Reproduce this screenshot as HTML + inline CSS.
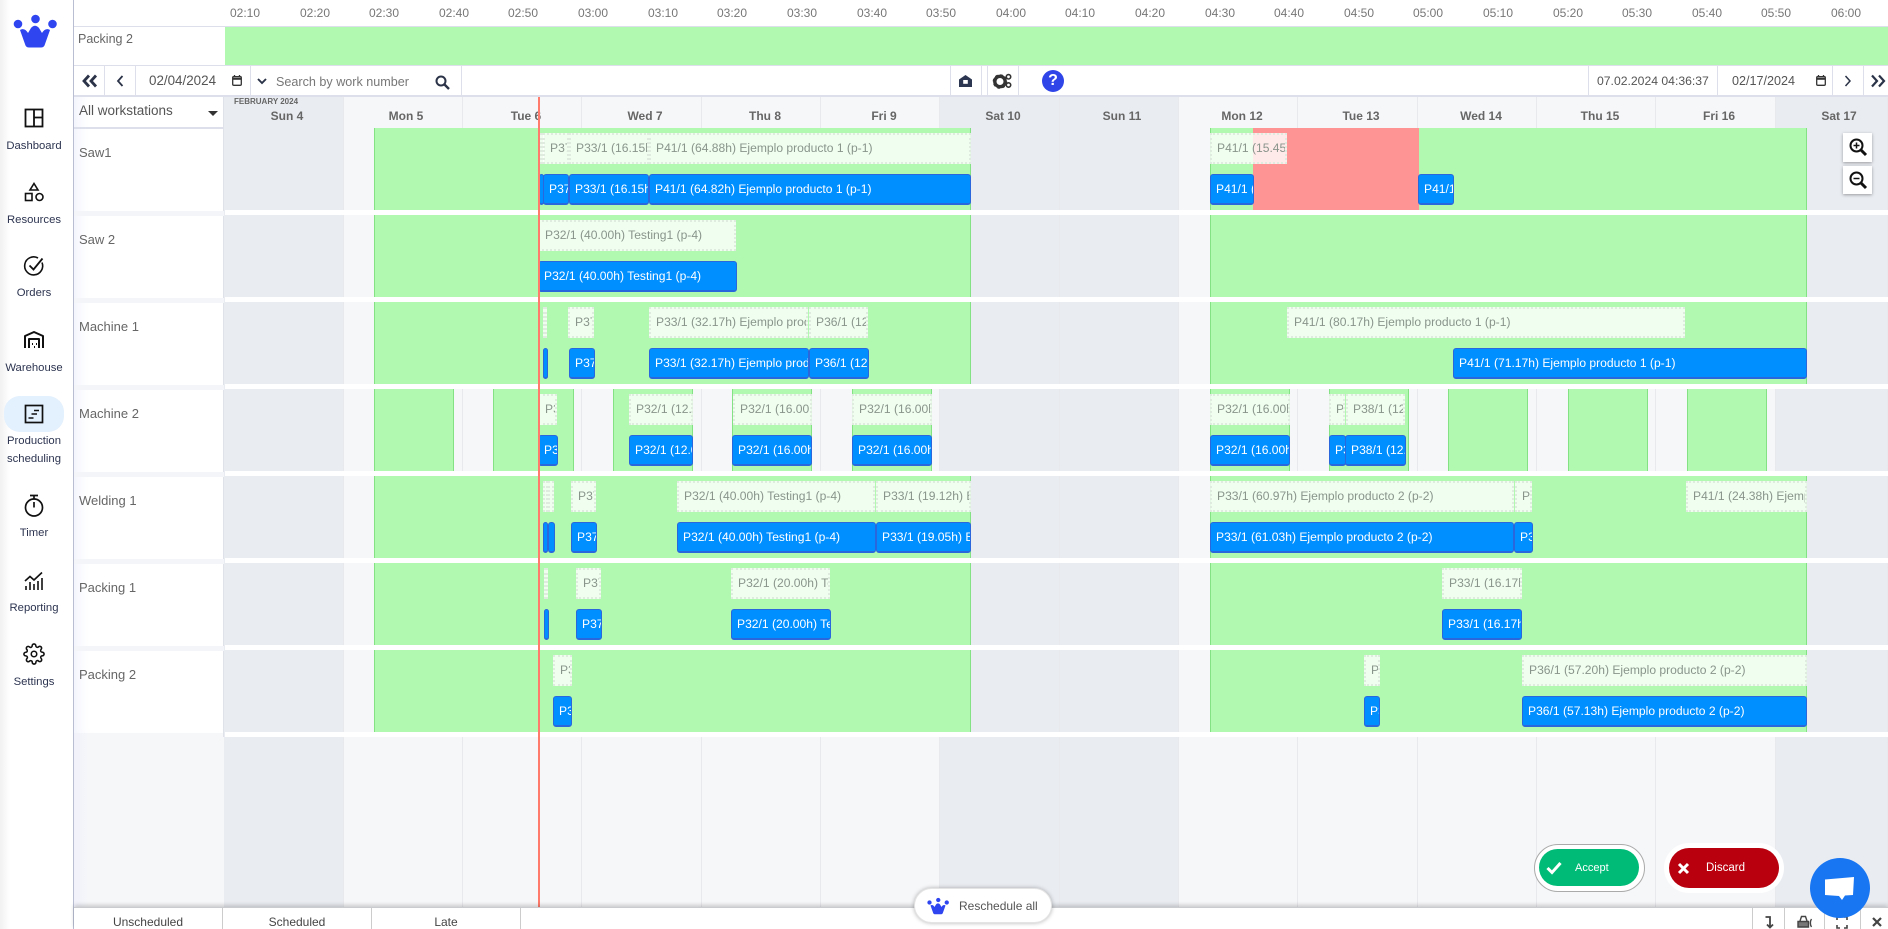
<!DOCTYPE html>
<html><head><meta charset="utf-8"><title>Production scheduling</title>
<style>
*{box-sizing:border-box}
html,body{margin:0;padding:0;width:1888px;height:929px;overflow:hidden;background:#fff;font-family:"Liberation Sans",sans-serif}
.a{position:absolute}
.t{position:absolute;top:6px;width:60px;text-align:center;font-size:12px;line-height:15px;color:#777}
.sb{position:absolute;left:0;width:68px;text-align:center;font-size:11.3px;line-height:18px;color:#2c3450}
.v{position:absolute;top:66px;width:1px;height:31px;background:#dde0ea}
.d{position:absolute;top:108px;width:60px;text-align:center;font-size:12px;font-weight:700;line-height:16px;color:#666}
.col{position:absolute;top:97px;height:810px;border-right:1px solid #e7e9ed}
.we{background:#e9ecf1}
.lab{position:absolute;left:79px;font-size:13px;line-height:16px;color:#666}
.gapl{position:absolute;left:74px;width:150px;height:5px;background:#f4f5f8}
.r{position:absolute;left:225px;width:1663px;height:82px}
.gr{position:absolute;top:0;height:82px;background:#b1f9b1;border-left:1px solid #84e184;border-right:1px solid #84e184}
.g,.b{position:absolute;overflow:hidden;white-space:nowrap;font-size:12.1px}
.g{top:5px;height:31px;line-height:27px;padding-left:5px;background:rgba(255,255,255,.8);border:2px dotted #dfebdf;color:#89948b}
.b{top:46px;height:31px;line-height:28px;padding-left:5px;background:#008fff;border:1px solid #2a66dc;border-bottom-width:2px;border-radius:3px;color:#fff}
.ic{position:absolute;overflow:visible}
.tab{position:absolute;top:908px;height:21px;border-right:1px solid #ccc;text-align:center;font-size:12px;line-height:28px;color:#444;overflow:hidden}
</style></head><body>

<!-- background columns -->
<div class="a" style="left:224px;top:97px;width:1664px;height:810px;background:#f6f7f9"></div>
<div class="col we" style="left:224px;width:120px"></div>
<div class="col" style="left:344px;width:119px"></div>
<div class="col" style="left:463px;width:119px"></div>
<div class="col" style="left:582px;width:120px"></div>
<div class="col" style="left:702px;width:119px"></div>
<div class="col" style="left:821px;width:119px"></div>
<div class="col we" style="left:940px;width:120px"></div>
<div class="col we" style="left:1060px;width:119px"></div>
<div class="col" style="left:1179px;width:119px"></div>
<div class="col" style="left:1298px;width:120px"></div>
<div class="col" style="left:1418px;width:119px"></div>
<div class="col" style="left:1537px;width:119px"></div>
<div class="col" style="left:1656px;width:120px"></div>
<div class="col we" style="left:1776px;width:112px"></div>

<!-- header row days -->
<div class="a" style="left:234px;top:97px;font-size:8px;line-height:10px;font-weight:700;color:#666">FEBRUARY 2024</div>
<div class="d" style="left:257px">Sun 4</div>
<div class="d" style="left:376px">Mon 5</div>
<div class="d" style="left:496px">Tue 6</div>
<div class="d" style="left:615px">Wed 7</div>
<div class="d" style="left:735px">Thu 8</div>
<div class="d" style="left:854px">Fri 9</div>
<div class="d" style="left:973px">Sat 10</div>
<div class="d" style="left:1092px">Sun 11</div>
<div class="d" style="left:1212px">Mon 12</div>
<div class="d" style="left:1331px">Tue 13</div>
<div class="d" style="left:1451px">Wed 14</div>
<div class="d" style="left:1570px">Thu 15</div>
<div class="d" style="left:1689px">Fri 16</div>
<div class="d" style="left:1809px">Sat 17</div>

<!-- white row gaps -->
<div class="a" style="left:225px;top:210px;width:1663px;height:5px;background:#fff"></div>
<div class="a" style="left:225px;top:297px;width:1663px;height:5px;background:#fff"></div>
<div class="a" style="left:225px;top:384px;width:1663px;height:5px;background:#fff"></div>
<div class="a" style="left:225px;top:471px;width:1663px;height:5px;background:#fff"></div>
<div class="a" style="left:225px;top:558px;width:1663px;height:5px;background:#fff"></div>
<div class="a" style="left:225px;top:645px;width:1663px;height:5px;background:#fff"></div>
<div class="a" style="left:225px;top:732px;width:1663px;height:5px;background:#fff"></div>

<!-- Rows: inner x = page x - 225 -->
<div class="r" style="top:128px">
  <div class="gr" style="left:149px;width:597px"></div>
  <div class="gr" style="left:985px;width:597px"></div>
  <div class="a" style="left:1028px;top:0;width:166px;height:82px;background:#ff9494"></div>
  <div class="g" style="left:315px;width:4px;padding:0"></div>
  <div class="g" style="left:318px;width:26px">P37/1</div>
  <div class="g" style="left:344px;width:80px">P33/1 (16.15h) Ejemplo</div>
  <div class="g" style="left:424px;width:322px">P41/1 (64.88h) Ejemplo producto 1 (p-1)</div>
  <div class="g" style="left:985px;width:77px">P41/1 (15.45h) Ejemplo</div>
  <div class="b" style="left:314px;width:5px;padding:0"></div>
  <div class="b" style="left:318px;width:26px">P37/1</div>
  <div class="b" style="left:344px;width:80px">P33/1 (16.15h) Ejemplo</div>
  <div class="b" style="left:424px;width:322px">P41/1 (64.82h) Ejemplo producto 1 (p-1)</div>
  <div class="b" style="left:985px;width:44px">P41/1 (15.4h)</div>
  <div class="b" style="left:1193px;width:36px">P41/1 (</div>
</div>
<div class="r" style="top:215px">
  <div class="gr" style="left:149px;width:597px"></div>
  <div class="gr" style="left:985px;width:597px"></div>
  <div class="g" style="left:313px;width:198px">P32/1 (40.00h) Testing1 (p-4)</div>
  <div class="b" style="left:313px;width:199px">P32/1 (40.00h) Testing1 (p-4)</div>
</div>
<div class="r" style="top:302px">
  <div class="gr" style="left:149px;width:597px"></div>
  <div class="gr" style="left:985px;width:597px"></div>
  <div class="g" style="left:318px;width:4px;padding:0"></div>
  <div class="g" style="left:343px;width:26px">P37/1</div>
  <div class="g" style="left:424px;width:159px">P33/1 (32.17h) Ejemplo producto</div>
  <div class="g" style="left:584px;width:59px">P36/1 (12.00h)</div>
  <div class="g" style="left:1062px;width:398px">P41/1 (80.17h) Ejemplo producto 1 (p-1)</div>
  <div class="b" style="left:318px;width:5px;padding:0"></div>
  <div class="b" style="left:344px;width:26px">P37/1</div>
  <div class="b" style="left:424px;width:160px">P33/1 (32.17h) Ejemplo producto</div>
  <div class="b" style="left:584px;width:60px">P36/1 (12.00h)</div>
  <div class="b" style="left:1228px;width:354px">P41/1 (71.17h) Ejemplo producto 1 (p-1)</div>
</div>
<div class="r" style="top:389px">
  <div class="gr" style="left:149px;width:80px"></div>
  <div class="gr" style="left:268px;width:81px"></div>
  <div class="gr" style="left:388px;width:80px"></div>
  <div class="gr" style="left:507px;width:80px"></div>
  <div class="gr" style="left:627px;width:80px"></div>
  <div class="gr" style="left:985px;width:80px"></div>
  <div class="gr" style="left:1104px;width:80px"></div>
  <div class="gr" style="left:1223px;width:80px"></div>
  <div class="gr" style="left:1343px;width:80px"></div>
  <div class="gr" style="left:1462px;width:80px"></div>
  <div class="g" style="left:313px;width:19px">P32/1</div>
  <div class="g" style="left:404px;width:64px">P32/1 (12.00h)</div>
  <div class="g" style="left:508px;width:79px">P32/1 (16.00h)</div>
  <div class="g" style="left:627px;width:80px">P32/1 (16.00h)</div>
  <div class="g" style="left:985px;width:80px">P32/1 (16.00h)</div>
  <div class="g" style="left:1104px;width:16px">P38/1</div>
  <div class="g" style="left:1121px;width:59px">P38/1 (12.00h)</div>
  <div class="b" style="left:313px;width:20px">P32/1</div>
  <div class="b" style="left:404px;width:64px">P32/1 (12.00h)</div>
  <div class="b" style="left:507px;width:80px">P32/1 (16.00h)</div>
  <div class="b" style="left:627px;width:80px">P32/1 (16.00h)</div>
  <div class="b" style="left:985px;width:80px">P32/1 (16.00h)</div>
  <div class="b" style="left:1104px;width:17px">P32/1</div>
  <div class="b" style="left:1120px;width:61px">P38/1 (12.00h)</div>
</div>
<div class="r" style="top:476px">
  <div class="gr" style="left:149px;width:597px"></div>
  <div class="gr" style="left:985px;width:597px"></div>
  <div class="g" style="left:318px;width:5px;padding:0"></div>
  <div class="g" style="left:323px;width:6px;padding:0"></div>
  <div class="g" style="left:346px;width:25px">P37/1</div>
  <div class="g" style="left:452px;width:198px">P32/1 (40.00h) Testing1 (p-4)</div>
  <div class="g" style="left:651px;width:95px">P33/1 (19.12h) Ejemplo</div>
  <div class="g" style="left:985px;width:304px">P33/1 (60.97h) Ejemplo producto 2 (p-2)</div>
  <div class="g" style="left:1290px;width:17px">P33/1</div>
  <div class="g" style="left:1461px;width:121px">P41/1 (24.38h) Ejemplo producto</div>
  <div class="b" style="left:318px;width:5px;padding:0"></div>
  <div class="b" style="left:323px;width:7px;padding:0"></div>
  <div class="b" style="left:346px;width:26px">P37/1</div>
  <div class="b" style="left:452px;width:199px">P32/1 (40.00h) Testing1 (p-4)</div>
  <div class="b" style="left:651px;width:95px">P33/1 (19.05h) Ejemplo</div>
  <div class="b" style="left:985px;width:304px">P33/1 (61.03h) Ejemplo producto 2 (p-2)</div>
  <div class="b" style="left:1289px;width:19px">P33/1</div>
</div>
<div class="r" style="top:563px">
  <div class="gr" style="left:149px;width:597px"></div>
  <div class="gr" style="left:985px;width:597px"></div>
  <div class="g" style="left:319px;width:4px;padding:0"></div>
  <div class="g" style="left:351px;width:25px">P37/1</div>
  <div class="g" style="left:506px;width:99px">P32/1 (20.00h) Testing1</div>
  <div class="g" style="left:1217px;width:80px">P33/1 (16.17h)</div>
  <div class="b" style="left:319px;width:5px;padding:0"></div>
  <div class="b" style="left:351px;width:26px">P37/1</div>
  <div class="b" style="left:506px;width:100px">P32/1 (20.00h) Testing1</div>
  <div class="b" style="left:1217px;width:80px">P33/1 (16.17h)</div>
</div>
<div class="r" style="top:650px">
  <div class="gr" style="left:149px;width:597px"></div>
  <div class="gr" style="left:985px;width:597px"></div>
  <div class="g" style="left:328px;width:19px">P33/1</div>
  <div class="g" style="left:1139px;width:16px">P33/1</div>
  <div class="g" style="left:1297px;width:285px">P36/1 (57.20h) Ejemplo producto 2 (p-2)</div>
  <div class="b" style="left:328px;width:19px">P33/1</div>
  <div class="b" style="left:1139px;width:16px">P33/1</div>
  <div class="b" style="left:1297px;width:285px">P36/1 (57.13h) Ejemplo producto 2 (p-2)</div>
</div>

<!-- now line -->
<div class="a" style="left:537.5px;top:97px;width:2px;height:810px;background:#ff7b6b"></div>

<!-- Time axis -->
<div class="a" style="left:0;top:0;width:1888px;height:27px;background:#fff;border-bottom:1px solid #dde0ea"></div>
<div class="t" style="left:215px">02:10</div><div class="t" style="left:285px">02:20</div><div class="t" style="left:354px">02:30</div><div class="t" style="left:424px">02:40</div><div class="t" style="left:493px">02:50</div><div class="t" style="left:563px">03:00</div><div class="t" style="left:633px">03:10</div><div class="t" style="left:702px">03:20</div><div class="t" style="left:772px">03:30</div><div class="t" style="left:842px">03:40</div><div class="t" style="left:911px">03:50</div><div class="t" style="left:981px">04:00</div><div class="t" style="left:1050px">04:10</div><div class="t" style="left:1120px">04:20</div><div class="t" style="left:1190px">04:30</div><div class="t" style="left:1259px">04:40</div><div class="t" style="left:1329px">04:50</div><div class="t" style="left:1398px">05:00</div><div class="t" style="left:1468px">05:10</div><div class="t" style="left:1538px">05:20</div><div class="t" style="left:1607px">05:30</div><div class="t" style="left:1677px">05:40</div><div class="t" style="left:1746px">05:50</div><div class="t" style="left:1816px">06:00</div>

<!-- Top packing row -->
<div class="a" style="left:74px;top:27px;width:151px;height:39px;background:#fff"></div>
<div class="a" style="left:78px;top:31px;font-size:12.5px;line-height:16px;color:#666">Packing 2</div>
<div class="a" style="left:225px;top:27px;width:1663px;height:38px;background:#b1f9b1"></div>

<!-- Toolbar -->
<div class="a" style="left:74px;top:65px;width:1814px;height:32px;background:#fff;border-top:1px solid #dde0ea;border-bottom:2px solid #dde0ea"></div>
<div class="v" style="left:104px"></div><div class="v" style="left:135px"></div><div class="v" style="left:250px"></div><div class="v" style="left:461px"></div>
<div class="v" style="left:950px"></div><div class="v" style="left:981px"></div><div class="v" style="left:987px"></div><div class="v" style="left:1018px"></div>
<div class="v" style="left:1588px"></div><div class="v" style="left:1717px"></div><div class="v" style="left:1832px"></div><div class="v" style="left:1863px"></div>

<svg class="ic" style="left:82px;top:74px" width="16" height="14" viewBox="0 0 16 14" fill="none" stroke="#2b3348" stroke-width="2.8"><path d="M7 1.500 2 7l5 5.500M14 1.500 9 7l5 5.500"/></svg>
<svg class="ic" style="left:116px;top:75px" width="8" height="12" viewBox="0 0 8 12" fill="none" stroke="#2b3348" stroke-width="1.800"><path d="M6.500 1 2 6l4.500 5"/></svg>
<div class="a" style="left:149px;top:73px;font-size:13.400px;line-height:16px;color:#555">02/04/2024</div>
<svg class="ic" style="left:232px;top:75px" width="10" height="11" viewBox="0 0 10 11" fill="none" stroke="#333" stroke-width="1.300"><rect x=".7" y="1.700" width="8.600" height="8.600" rx="1"/><path d="M.7 3.800h8.600" stroke-width="2"/><path d="M2.500 0v2M7.500 0v2"/></svg>
<svg class="ic" style="left:257px;top:78px" width="10" height="7" viewBox="0 0 10 7" fill="none" stroke="#2b3348" stroke-width="1.900"><path d="M1 1l4 4 4-4"/></svg>
<div class="a" style="left:276px;top:74px;font-size:12.600px;line-height:16px;color:#777">Search by work number</div>
<svg class="ic" style="left:435px;top:75px" width="15" height="15" viewBox="0 0 15 15" fill="none" stroke="#2b3348" stroke-width="2"><circle cx="6" cy="6" r="4.500"/><path d="M9.500 9.500 14 14" stroke-width="2.400"/></svg>
<svg class="ic" style="left:959px;top:75px" width="13" height="12" viewBox="0 0 13 12"><path d="M6.500 0 13 4.500V12H0V4.500z" fill="#2d3650"/><rect x="4.200" y="5" width="4.600" height="3.800" fill="#fff"/></svg>
<svg class="ic" style="left:993px;top:74px" width="20" height="16" viewBox="0 0 20 16"><circle cx="7" cy="7.500" r="5.200" fill="none" stroke="#333" stroke-width="3.400"/><circle cx="7" cy="7.500" r="6.300" fill="none" stroke="#333" stroke-width="2" stroke-dasharray="2.500 2.450"/><circle cx="15.500" cy="2.800" r="2.200" fill="none" stroke="#333" stroke-width="1.600"/><circle cx="15.500" cy="11" r="2.200" fill="none" stroke="#333" stroke-width="1.600"/></svg>
<div class="a" style="left:1042px;top:70px;width:22px;height:22px;border-radius:50%;background:#2f45e8;color:#fff;text-align:center;font-size:16px;font-weight:700;line-height:22px">?</div>
<div class="a" style="left:1597px;top:73px;font-size:12.200px;line-height:16px;color:#555">07.02.2024 04:36:37</div>
<div class="a" style="left:1732px;top:73px;font-size:12.600px;line-height:16px;color:#555">02/17/2024</div>
<svg class="ic" style="left:1816px;top:75px" width="10" height="11" viewBox="0 0 10 11" fill="none" stroke="#333" stroke-width="1.300"><rect x=".7" y="1.700" width="8.600" height="8.600" rx="1"/><path d="M.7 3.800h8.600" stroke-width="2"/><path d="M2.500 0v2M7.500 0v2"/></svg>
<svg class="ic" style="left:1844px;top:75px" width="8" height="12" viewBox="0 0 8 12" fill="none" stroke="#2b3348" stroke-width="1.500"><path d="M1.500 1 6 6l-4.500 5"/></svg>
<svg class="ic" style="left:1870px;top:74px" width="16" height="14" viewBox="0 0 16 14" fill="none" stroke="#2b3348" stroke-width="2.200"><path d="M2 1.500 7 7l-5 5.500M9 1.500 14 7l-5 5.500"/></svg>

<!-- Left label panel -->
<div class="a" style="left:74px;top:97px;width:150px;height:636px;background:#fff;box-shadow:inset 14px 0 14px -10px #eff1fc"></div>
<div class="a" style="left:74px;top:733px;width:150px;height:174px;background:linear-gradient(90deg,#f0f1fa,#f6f7f9 14px)"></div>
<div class="a" style="left:223px;top:97px;width:1px;height:640px;background:#dfe2e8"></div>
<div class="a" style="left:74px;top:127px;width:149px;height:2px;background:#dde0ea"></div>
<div class="a" style="left:79px;top:103px;font-size:13.500px;line-height:16px;color:#555">All workstations</div>
<div class="a" style="left:208px;top:111px;width:0;height:0;border-left:5px solid transparent;border-right:5px solid transparent;border-top:5px solid #333"></div>
<div class="gapl" style="top:211px"></div><div class="gapl" style="top:298px"></div><div class="gapl" style="top:385px"></div><div class="gapl" style="top:472px"></div><div class="gapl" style="top:559px"></div><div class="gapl" style="top:646px"></div>
<div class="lab" style="top:145px">Saw1</div>
<div class="lab" style="top:232px">Saw 2</div>
<div class="lab" style="top:319px">Machine 1</div>
<div class="lab" style="top:406px">Machine 2</div>
<div class="lab" style="top:493px">Welding 1</div>
<div class="lab" style="top:580px">Packing 1</div>
<div class="lab" style="top:667px">Packing 2</div>

<!-- Sidebar -->
<div class="a" style="left:0;top:0;width:74px;height:929px;background:linear-gradient(90deg,#f1f1f1,#fff 10px);border-right:1px solid #b9bed3"></div>
<svg class="ic" style="left:13px;top:14px" width="44" height="34" viewBox="0 0 44 34" fill="#2e45f0"><circle cx="5" cy="10" r="4.300"/><circle cx="22.500" cy="5" r="4.300"/><circle cx="39.500" cy="10" r="4.300"/><path d="M7 16c3-2 6-.5 8 3l3-5c2.500-3 5.500-3 8 0l3 5c2-3.500 5-5 8-3l-5.500 15.500c-1 1.500-2 2-3.500 2H16c-1.500 0-2.500-.5-3.500-2z"/></svg>

<svg class="ic" style="left:24px;top:108px" width="20" height="20" viewBox="0 0 20 20" fill="none" stroke="#111" stroke-width="1.800"><rect x="1.500" y="1.500" width="17" height="17"/><path d="M10 1.500v17M10 9.500h8.500"/></svg>
<div class="sb" style="top:136.500px">Dashboard</div>
<svg class="ic" style="left:24px;top:182px" width="20" height="20" viewBox="0 0 20 20" fill="none" stroke="#111" stroke-width="1.600"><path d="M10 1.500 14 8H6z"/><rect x="1.500" y="11.500" width="6.500" height="7"/><circle cx="15.500" cy="15" r="3.500"/></svg>
<div class="sb" style="top:211px">Resources</div>
<svg class="ic" style="left:23px;top:255px" width="22" height="22" viewBox="0 0 22 22" fill="none" stroke="#111" stroke-width="1.600"><path d="M19 7.500A9 9 0 1 1 15 3"/><path d="M6.500 10.500 10.500 14.500 19.500 3.500" stroke-width="1.800"/></svg>
<div class="sb" style="top:284px">Orders</div>
<svg class="ic" style="left:23px;top:330px" width="22" height="20" viewBox="0 0 22 20" fill="none" stroke="#111" stroke-width="2"><path d="M2 18V6l9-4 9 4v12M6 18V9h10v9" stroke-linejoin="round"/><path d="M9 14h1M13 14h1M11 17h1"/></svg>
<div class="sb" style="top:359px">Warehouse</div>
<div class="a" style="left:4px;top:396px;width:60px;height:36px;border-radius:16px;background:#e3f0fd"></div>
<svg class="ic" style="left:24px;top:404px" width="20" height="20" viewBox="0 0 20 20" fill="none" stroke="#111" stroke-width="1.500"><rect x="1.500" y="1.500" width="17" height="17" stroke-width="1.700"/><path d="M10 6.500h5M7.500 10h5.500M4.500 14h5"/></svg>
<div class="sb" style="top:432px;color:#2c3450">Production<br>scheduling</div>
<svg class="ic" style="left:24px;top:494px" width="20" height="24" viewBox="0 0 20 24" fill="none" stroke="#111" stroke-width="1.700"><path d="M6 1.500h8M10 1.500V5"/><circle cx="10" cy="13.500" r="8.500"/><path d="M10 13.500V8"/></svg>
<div class="sb" style="top:524px">Timer</div>
<svg class="ic" style="left:24px;top:571px" width="20" height="20" viewBox="0 0 20 20" fill="none" stroke="#111" stroke-width="1.600"><path d="M1 10 6 5.500l4 3.500 8-7.500"/><path d="M2 19v-4M6 19v-8M10 19v-6M14 19v-9M18 19v-12"/></svg>
<div class="sb" style="top:599px">Reporting</div>
<svg class="ic" style="left:23px;top:643px" width="22" height="22" viewBox="0 0 24 24" fill="none" stroke="#111" stroke-width="1.700"><circle cx="12" cy="12" r="3"/><path d="M19.400 15a1.650 1.650 0 0 0 .33 1.820l.06.06a2 2 0 0 1 0 2.830 2 2 0 0 1-2.830 0l-.06-.06a1.650 1.650 0 0 0-1.820-.33 1.650 1.650 0 0 0-1 1.510V21a2 2 0 0 1-2 2 2 2 0 0 1-2-2v-.09A1.650 1.650 0 0 0 9 19.400a1.650 1.650 0 0 0-1.820.33l-.06.06a2 2 0 0 1-2.830 0 2 2 0 0 1 0-2.830l.06-.06a1.650 1.650 0 0 0 .33-1.820 1.650 1.650 0 0 0-1.510-1H3a2 2 0 0 1-2-2 2 2 0 0 1 2-2h.09A1.650 1.650 0 0 0 4.600 9a1.650 1.650 0 0 0-.33-1.820l-.06-.06a2 2 0 0 1 0-2.830 2 2 0 0 1 2.830 0l.06.06a1.650 1.650 0 0 0 1.820.33H9a1.650 1.650 0 0 0 1-1.510V3a2 2 0 0 1 2-2 2 2 0 0 1 2 2v.09a1.650 1.650 0 0 0 1 1.510 1.650 1.650 0 0 0 1.820-.33l.06-.06a2 2 0 0 1 2.830 0 2 2 0 0 1 0 2.830l-.06.06a1.650 1.650 0 0 0-.33 1.820V9a1.650 1.650 0 0 0 1.510 1H21a2 2 0 0 1 2 2 2 2 0 0 1-2 2h-.09a1.650 1.650 0 0 0-1.510 1z"/></svg>
<div class="sb" style="top:672.500px">Settings</div>

<!-- Zoom buttons -->
<div class="a" style="left:1843px;top:133px;width:29px;height:29px;background:#fff;box-shadow:0 1px 3px rgba(0,0,0,.35)"></div>
<svg class="ic" style="left:1849px;top:138px" width="18" height="18" viewBox="0 0 18 18" fill="none" stroke="#111" stroke-width="2"><circle cx="7.500" cy="7.500" r="6"/><path d="M12 12 17 17" stroke-width="3"/><path d="M7.500 4.500v6M4.500 7.500h6" stroke-width="1.500"/></svg>
<div class="a" style="left:1843px;top:166px;width:29px;height:28px;background:#fff;box-shadow:0 1px 3px rgba(0,0,0,.35)"></div>
<svg class="ic" style="left:1849px;top:171px" width="18" height="18" viewBox="0 0 18 18" fill="none" stroke="#111" stroke-width="2"><circle cx="7.500" cy="7.500" r="6"/><path d="M12 12 17 17" stroke-width="3"/><path d="M4.500 7.500h6" stroke-width="1.500"/></svg>

<!-- Bottom bar -->
<div class="a" style="left:74px;top:907px;width:1814px;height:22px;background:#fff;border-top:1px solid #c9cbcf;box-shadow:0 -2px 4px rgba(0,0,0,.18)"></div>
<div class="tab" style="left:74px;width:149px">Unscheduled</div>
<div class="tab" style="left:223px;width:149px">Scheduled</div>
<div class="tab" style="left:372px;width:149px">Late</div>
<div class="a" style="left:1752px;top:908px;width:1px;height:21px;background:#ccc"></div>
<div class="a" style="left:1784px;top:908px;width:1px;height:21px;background:#ccc"></div>
<div class="a" style="left:1824px;top:908px;width:1px;height:21px;background:#ccc"></div>
<div class="a" style="left:1860px;top:908px;width:1px;height:21px;background:#ccc"></div>
<svg class="ic" style="left:1764px;top:916px" width="10" height="13" viewBox="0 0 10 13" fill="none" stroke="#444" stroke-width="1.800"><path d="M1.500 1h4.500v10M3 8.500l3 3 3-3"/></svg>
<svg class="ic" style="left:1797px;top:915px" width="16" height="14" viewBox="0 0 16 14" fill="none" stroke="#444" stroke-width="1.400"><path d="M3 6 4.500 1.500h4L10 6"/><path d="M1 12V6.500h10.500V12z" fill="#777"/><path d="M14.500 4c-1.500 2-1.500 6 0 8"/></svg>
<svg class="ic" style="left:1836px;top:916px" width="12" height="13" viewBox="0 0 12 13" fill="none" stroke="#444" stroke-width="1.600"><path d="M1 4V1h3M8 1h3v3M11 9v3H8M4 12H1V9"/></svg>
<svg class="ic" style="left:1872px;top:917px" width="10" height="10" viewBox="0 0 10 10" fill="none" stroke="#444" stroke-width="2.200"><path d="M1 1l8 8M9 1 1 9"/></svg>

<!-- Reschedule pill -->
<div class="a" style="left:914px;top:888px;width:138px;height:35px;border-radius:18px;background:#fff;border:1px solid #e4e4e4;box-shadow:0 0 4px rgba(0,0,0,.3)"></div>
<svg class="ic" style="left:927px;top:897px" width="22" height="18" viewBox="0 0 44 34" fill="#2e45f0"><circle cx="5" cy="10" r="4.300"/><circle cx="22.500" cy="5" r="4.300"/><circle cx="39.500" cy="10" r="4.300"/><path d="M7 16c3-2 6-.5 8 3l3-5c2.500-3 5.500-3 8 0l3 5c2-3.500 5-5 8-3l-5.500 15.500c-1 1.500-2 2-3.500 2H16c-1.500 0-2.500-.5-3.500-2z"/></svg>
<div class="a" style="left:959px;top:898px;font-size:12px;line-height:16px;color:#555">Reschedule all</div>

<!-- Accept / Discard -->
<div class="a" style="left:1534px;top:844px;width:111px;height:48px;border-radius:24px;background:#fff;border:1px solid #aaa"></div>
<div class="a" style="left:1539px;top:849px;width:100px;height:37px;border-radius:19px;background:#00bb77"></div>
<svg class="ic" style="left:1546px;top:861px" width="16" height="14" viewBox="0 0 16 14" fill="none" stroke="#fff" stroke-width="3"><path d="M1.500 7 6 11.500 14.500 2"/></svg>
<div class="a" style="left:1575px;top:860px;font-size:11px;line-height:16px;color:#fff">Accept</div>
<div class="a" style="left:1664px;top:843px;width:120px;height:50px;border-radius:25px;background:#fff"></div>
<div class="a" style="left:1669px;top:848px;width:110px;height:40px;border-radius:20px;background:#b8000e"></div>
<svg class="ic" style="left:1678px;top:863px" width="11" height="11" viewBox="0 0 11 11" fill="none" stroke="#fff" stroke-width="3"><path d="M1 1l9 9M10 1l-9 9"/></svg>
<div class="a" style="left:1706px;top:860px;font-size:11.500px;line-height:16px;color:#fff">Discard</div>

<!-- Chat -->
<div class="a" style="left:1810px;top:858px;width:60px;height:60px;border-radius:50%;background:#1976f2"></div>
<svg class="ic" style="left:1824px;top:876px" width="31" height="26" viewBox="0 0 31 26"><path d="M1 3.500 30 1l-1 18-8 .5-3 4.500-3-4-14-1z" fill="#fff"/></svg>

</body></html>
